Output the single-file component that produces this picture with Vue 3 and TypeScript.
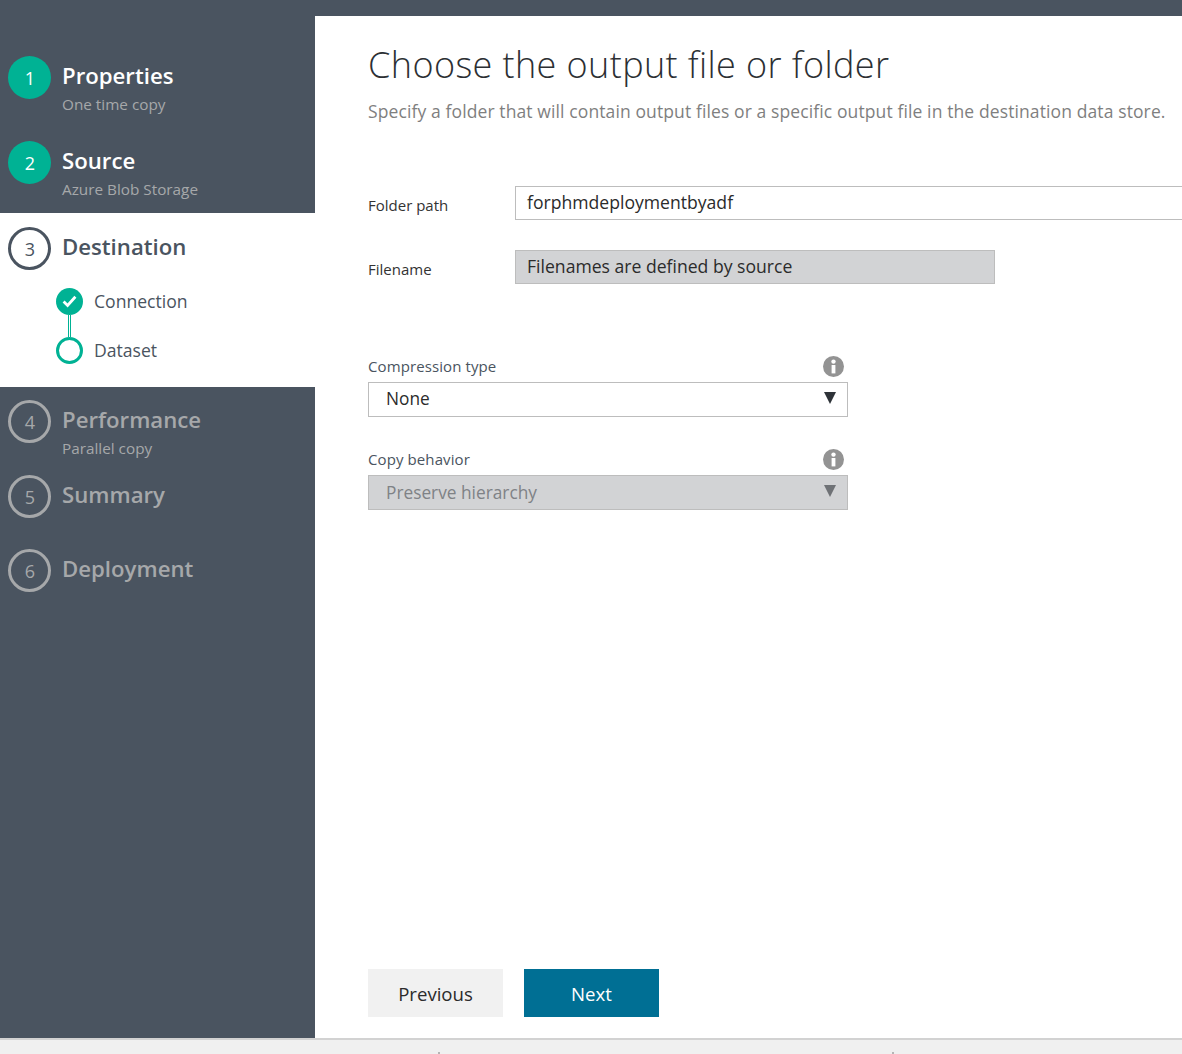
<template>
  <div class="page">
    <div class="topbar"></div>
    <div class="body">
      <aside class="sidebar">
        <template v-for="step in steps" :key="step.num">
          <div v-if="step.children" class="current">
            <div class="step" :class="step.state">
              <div class="circle">{{ step.num }}</div>
              <div class="step-text">
                <div class="step-title">{{ step.title }}</div>
              </div>
            </div>
            <div class="substeps">
              <div class="substep">
                <span class="sub-dot done">
                  <svg width="15" height="13" viewBox="0 0 15 13">
                    <path d="M1.6 6.4 L5.6 10.4 L13.4 1.8" fill="none" stroke="#fff" stroke-width="2.8" />
                  </svg>
                </span>
                <span class="sub-label">Connection</span>
              </div>
              <div class="sub-line"></div>
              <div class="substep second">
                <span class="sub-dot open"></span>
                <span class="sub-label">Dataset</span>
              </div>
            </div>
          </div>
          <div v-else class="step" :class="[step.state, 'step-' + step.num]">
            <div class="circle">{{ step.num }}</div>
            <div class="step-text">
              <div class="step-title">{{ step.title }}</div>
              <div v-if="step.sub" class="step-sub">{{ step.sub }}</div>
            </div>
          </div>
        </template>
      </aside>

      <main class="main">
        <h1 class="title">Choose the output file or folder</h1>
        <p class="subtitle">Specify a folder that will contain output files or a specific output file in the destination data store.</p>

        <div class="row first-row">
          <label class="row-label">Folder path</label>
          <div class="box path-box">forphmdeploymentbyadf</div>
        </div>
        <div class="row second-row">
          <label class="row-label">Filename</label>
          <div class="box disabled file-box">Filenames are defined by source</div>
        </div>

        <div class="field compression">
          <div class="field-head">
            <label class="field-label">Compression type</label>
            <svg class="info" width="21" height="21" viewBox="0 0 21 21">
              <circle cx="10.5" cy="10.5" r="10.5" fill="#939393" />
              <circle cx="10.5" cy="5.6" r="2.2" fill="#fff" />
              <rect x="8.6" y="9" width="3.8" height="8.4" fill="#fff" />
            </svg>
          </div>
          <div class="box select">
            <span class="select-value">None</span>
            <span class="arrow"></span>
          </div>
        </div>

        <div class="field behavior">
          <div class="field-head">
            <label class="field-label">Copy behavior</label>
            <svg class="info" width="21" height="21" viewBox="0 0 21 21">
              <circle cx="10.5" cy="10.5" r="10.5" fill="#939393" />
              <circle cx="10.5" cy="5.6" r="2.2" fill="#fff" />
              <rect x="8.6" y="9" width="3.8" height="8.4" fill="#fff" />
            </svg>
          </div>
          <div class="box select disabled muted">
            <span class="select-value">Preserve hierarchy</span>
            <span class="arrow"></span>
          </div>
        </div>

        <div class="buttons">
          <button class="btn prev">Previous</button>
          <button class="btn next">Next</button>
        </div>
      </main>
    </div>
    <div class="statusbar">
      <span class="tick tick-a"></span>
      <span class="tick tick-b"></span>
    </div>
  </div>
</template>

<script setup lang="ts">
interface Step {
  num: number
  title: string
  sub?: string
  state: 'done' | 'active' | 'todo'
  children?: boolean
}

const steps: Step[] = [
  { num: 1, title: 'Properties', sub: 'One time copy', state: 'done' },
  { num: 2, title: 'Source', sub: 'Azure Blob Storage', state: 'done' },
  { num: 3, title: 'Destination', state: 'active', children: true },
  { num: 4, title: 'Performance', sub: 'Parallel copy', state: 'todo' },
  { num: 5, title: 'Summary', state: 'todo' },
  { num: 6, title: 'Deployment', state: 'todo' },
]
</script>

<style>
html, body {
  margin: 0;
  background: #fff;
}
</style>

<style scoped>
.page {
  width: 1182px;
  height: 1054px;
  display: flex;
  flex-direction: column;
  overflow: hidden;
  position: relative;
  font-family: "Open Sans", "Noto Sans", sans-serif;
}
.topbar {
  height: 16px;
  flex: none;
  background: #4a5460;
}
.body {
  display: flex;
  height: 1022px;
  flex: none;
}
.sidebar {
  width: 315px;
  flex: none;
  background: #4a5460;
  padding-top: 40px;
  box-sizing: border-box;
}
.step {
  display: flex;
  padding-left: 8px;
  gap: 11px;
  box-sizing: border-box;
}
.step.done { height: 85px; }
.step-2.done { height: 72px; }
.step-4 { margin-top: 13px; height: 75px; }
.step-5 { height: 74px; }
.circle {
  width: 43px;
  height: 43px;
  flex: none;
  box-sizing: border-box;
  border-radius: 50%;
  display: flex;
  align-items: center;
  justify-content: center;
  font-size: 18px;
  padding-left: 1px;
}
.done .circle {
  background: #00b294;
  color: #fff;
}
.active .circle {
  border: 3px solid #4a5460;
  color: #4a5460;
}
.todo .circle {
  border: 3px solid #a6a8aa;
  color: #a6a8aa;
}
.step-text {
  min-width: 0;
}
.step-title {
  font-size: 22.2px;
  font-weight: 600;
  line-height: 30px;
  margin-top: 5px;
}
.done .step-title { color: #fff; }
.active .step-title { color: #4a5460; }
.todo .step-title { color: #a6a8aa; }
.step-sub {
  font-size: 15.3px;
  line-height: 20px;
  margin-top: 3px;
  color: #a6a8aa;
}
.current {
  background: #fff;
  height: 174px;
  padding-top: 14px;
  box-sizing: border-box;
}
.substeps {
  padding-left: 56px;
  margin-top: 18px;
}
.substep {
  display: flex;
  align-items: center;
  height: 27px;
  gap: 11px;
}
.sub-dot {
  width: 27px;
  height: 27px;
  box-sizing: border-box;
  border-radius: 50%;
  flex: none;
  display: flex;
  align-items: center;
  justify-content: center;
}
.sub-dot.done { background: #00b294; }
.sub-dot.open { border: 3px solid #00b294; }
.sub-label {
  font-size: 17.6px;
  color: #4a5460;
  padding-bottom: 2px;
}
.sub-line {
  width: 1px;
  height: 22px;
  margin-left: 12px;
  border-left: 1px solid #00b294;
  border-right: 1px solid #00b294;
  background: #fff;
}
.main {
  flex: 1;
  min-width: 0;
  background: #fff;
  padding-left: 53px;
  display: flex;
  flex-direction: column;
  color: #2b2b2b;
}
.title {
  margin: 24px 0 0;
  font-size: 36px;
  font-weight: 300;
  letter-spacing: 0.4px;
  line-height: 50px;
  color: #2c2f33;
  white-space: nowrap;
}
.subtitle {
  margin: 8px 0 0;
  font-size: 17.5px;
  letter-spacing: 0.11px;
  line-height: 26px;
  color: #7f7f7f;
  white-space: nowrap;
}
.row {
  display: flex;
  align-items: flex-start;
}
.first-row { margin-top: 62px; }
.second-row { margin-top: 30px; }
.row-label {
  width: 147px;
  flex: none;
  font-size: 15px;
  line-height: 20px;
  padding-top: 9px;
  color: #333;
}
.box {
  box-sizing: border-box;
  height: 34px;
  border: 1px solid #bdbdbd;
  padding: 0 11px;
  font-size: 17.6px;
  line-height: 30px;
  color: #2b2b2b;
  white-space: nowrap;
}
.path-box { flex: 1; margin-right: -10px; }
.file-box { width: 480px; }
.disabled { background: #d2d3d5; }
.field { width: 480px; }
.compression { margin-top: 72px; }
.behavior { margin-top: 32px; }
.field-head {
  display: flex;
  justify-content: space-between;
  align-items: center;
  height: 21px;
  padding-right: 4px;
  margin-bottom: 5px;
}
.field-label {
  font-size: 15px;
  letter-spacing: 0.1px;
  color: #4a5460;
  padding-bottom: 2px;
}
.info {
  display: block;
  flex: none;
}
.select {
  height: 35px;
  padding: 0 11px 0 17px;
  display: flex;
  align-items: center;
  justify-content: space-between;
  font-size: 17.3px;
}
.select-value {
  padding-bottom: 2px;
}
.select.muted {
  color: #7f8286;
}
.muted .select-value {
  padding-bottom: 0;
}
.arrow {
  width: 0;
  height: 0;
  border-left: 6px solid transparent;
  border-right: 6px solid transparent;
  border-top: 12px solid #2e3338;
  margin-top: -3px;
}
.muted .arrow { border-top-color: #6f7276; }
.buttons {
  display: flex;
  gap: 21px;
  margin-top: auto;
  padding-bottom: 21px;
}
.btn {
  width: 135px;
  height: 48px;
  border: 0;
  padding: 0;
  font-family: inherit;
  font-size: 18.6px;
}
.prev {
  background: #f1f1f1;
  color: #2b2b2b;
}
.next {
  background: #006f94;
  color: #fff;
}
.statusbar {
  flex: none;
  height: 16px;
  box-sizing: border-box;
  border-top: 2px solid #d2d2d2;
  background: #f0f0f0;
  position: relative;
}
.tick {
  position: absolute;
  top: 12px;
  width: 2px;
  height: 2px;
  background: #b5b5b5;
}
.tick-a { left: 438px; }
.tick-b { left: 892px; }
</style>
